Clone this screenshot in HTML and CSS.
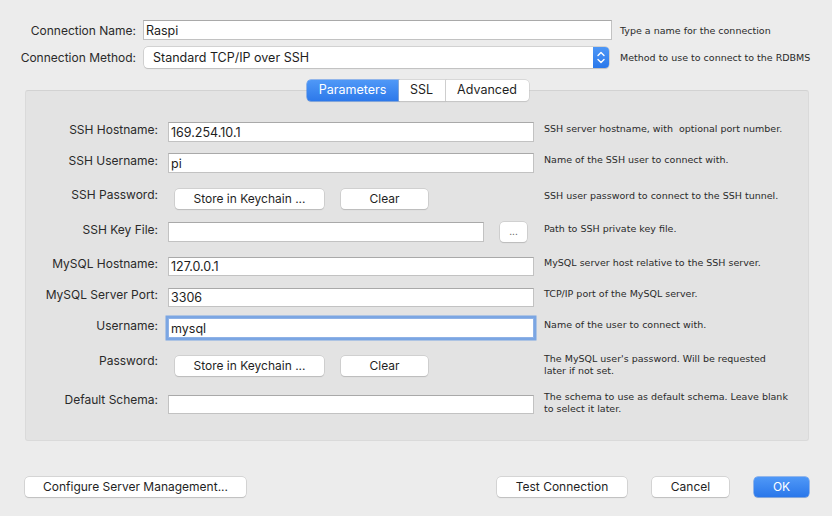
FILE: index.html
```html
<!DOCTYPE html>
<html>
<head>
<meta charset="utf-8">
<link rel="stylesheet" href="styles.css">
</head>
<body>
<div class="dialog">
  <div class="top">
    <div class="trow r1">
      <label class="lbl">Connection Name:</label>
      <div class="input wide">Raspi</div>
      <span class="help">Type a name for the connection</span>
    </div>
    <div class="trow r2">
      <label class="lbl">Connection Method:</label>
      <div class="select">
        <span>Standard TCP/IP over SSH</span>
        <span class="stepper">
          <svg width="16" height="21" viewBox="0 0 16 21"><path d="M5 8.5 L8 5.5 L11 8.5" fill="none" stroke="#fff" stroke-width="1.4" stroke-linecap="round" stroke-linejoin="round"/><path d="M5 12.5 L8 15.5 L11 12.5" fill="none" stroke="#fff" stroke-width="1.4" stroke-linecap="round" stroke-linejoin="round"/></svg>
        </span>
      </div>
      <span class="help">Method to use to connect to the RDBMS</span>
    </div>
  </div>

  <div class="panel-wrap">
    <div class="tabs">
      <span class="tab active">Parameters</span><span class="tab">SSL</span><span class="tab">Advanced</span>
    </div>
    <div class="panel">
      <div class="prow g1">
        <label class="lbl">SSH Hostname:</label>
        <div class="input">169.254.10.1</div>
        <span class="help">SSH server hostname, with&nbsp; optional port number.</span>
      </div>
      <div class="prow g2">
        <label class="lbl">SSH Username:</label>
        <div class="input">pi</div>
        <span class="help">Name of the SSH user to connect with.</span>
      </div>
      <div class="prow g3">
        <label class="lbl">SSH Password:</label>
        <div class="btns">
          <span class="btn keychain">Store in Keychain ...</span>
          <span class="btn clear">Clear</span>
        </div>
        <span class="help">SSH user password to connect to the SSH tunnel.</span>
      </div>
      <div class="prow g4">
        <label class="lbl">SSH Key File:</label>
        <div class="filebox">
          <div class="input keyfile"></div>
          <span class="btn dots">...</span>
        </div>
        <span class="help">Path to SSH private key file.</span>
      </div>
      <div class="prow g5">
        <label class="lbl">MySQL Hostname:</label>
        <div class="input">127.0.0.1</div>
        <span class="help">MySQL server host relative to the SSH server.</span>
      </div>
      <div class="prow g6">
        <label class="lbl">MySQL Server Port:</label>
        <div class="input">3306</div>
        <span class="help">TCP/IP port of the MySQL server.</span>
      </div>
      <div class="prow g7">
        <label class="lbl">Username:</label>
        <div class="input focus">mysql</div>
        <span class="help">Name of the user to connect with.</span>
      </div>
      <div class="prow g8">
        <label class="lbl">Password:</label>
        <div class="btns">
          <span class="btn keychain">Store in Keychain ...</span>
          <span class="btn clear">Clear</span>
        </div>
        <span class="help two">The MySQL user's password. Will be requested later if not set.</span>
      </div>
      <div class="prow g9">
        <label class="lbl">Default Schema:</label>
        <div class="input"></div>
        <span class="help two">The schema to use as default schema. Leave blank to select it later.</span>
      </div>
    </div>
  </div>

  <div class="footer">
    <span class="btn configure">Configure Server Management...</span>
    <div class="right">
      <span class="btn test">Test Connection</span>
      <span class="btn cancel">Cancel</span>
      <span class="btn ok">OK</span>
    </div>
  </div>
</div>
</body>
</html>
```

FILE: styles.css
```css
* { box-sizing: border-box; }
html, body { margin: 0; padding: 0; }
body {
  width: 832px;
  height: 516px;
  background: #ececec;
  font-family: Inter, "Liberation Sans", sans-serif;
  font-size: 12px;
  color: #262626;
  overflow: hidden;
}
.dialog { padding: 20px 0 0 0; }

.lbl {
  text-align: right;
  color: #2a2a2a;
  white-space: nowrap;
  font-size: 12px;
}
.help {
  font-family: "DejaVu Sans", sans-serif;
  font-size: 9.5px;
  color: #2a2a2a;
  white-space: nowrap;
}
.help.two { white-space: normal; line-height: 11.5px; }

.trow {
  display: grid;
  grid-template-columns: 136px 469px auto;
  column-gap: 7px;
  align-items: center;
}
.trow .help { margin-left: 1px; }
.r2 { margin-top: 7px; }
.r1 { height: 20px; }

.input {
  height: 20px;
  background: #fff;
  border: 1px solid #c2c2c2;
  border-top-color: #a9a9a9;
  padding: 0 0 0 2px;
  line-height: 19px;
  font-size: 12.5px;
  color: #1d1d1d;
}
.input.wide { width: 469px; }
.input.focus {
  box-shadow: 0 0 0 2.5px #7ba6e3;
  border-color: #8fb2e6;
}

.select {
  margin-left: 1px;
  width: 465px;
  height: 21px;
  background: #fff;
  border-radius: 4px;
  box-shadow: 0 0 0 0.5px #b8b8b8, 0 1px 1px rgba(0,0,0,0.15);
  display: flex;
  justify-content: space-between;
  align-items: center;
  padding-left: 9px;
  font-size: 12.5px;
  color: #1d1d1d;
}
.stepper {
  width: 16px;
  height: 21px;
  background: linear-gradient(#4d97f6, #2a78eb);
  border-radius: 0 4px 4px 0;
  display: block;
}
.stepper svg { display: block; }

.panel-wrap { margin-top: 12px; position: relative; padding: 0 23px 0 25px; }
.tabs {
  display: flex;
  justify-content: center;
  height: 21px;
  margin-left: 1px;
  position: relative;
  z-index: 2;
}
.tab {
  height: 21px;
  line-height: 20px;
  background: #fff;
  font-size: 12.5px;
  color: #1f1f1f;
  box-shadow: 0 0 0 0.5px #c4c4c4, 0 1px 1px rgba(0,0,0,0.12);
  text-align: center;
}
.tab:nth-child(1) { width: 92px; border-radius: 4px 0 0 4px; }
.tab:nth-child(2) { width: 47px; border-right: 1px solid #dcdcdc; }
.tab:nth-child(3) { width: 83px; border-radius: 0 4px 4px 0; }
.tab.active {
  background: linear-gradient(#4f98f7, #2d79ea);
  color: #fff;
  box-shadow: 0 0 0 0.5px #3a80e8, 0 1px 1px rgba(0,0,0,0.12);
}
.panel {
  margin-top: -11px;
  height: 351px;
  background: #e3e3e3;
  border: 1px solid #dadada;
  border-top-color: #d2d2d2;
  border-radius: 3px;
  padding-top: 31px;
}

.prow {
  display: grid;
  grid-template-columns: 132px 366px auto;
  column-gap: 10px;
  align-items: center;
  height: 20px;
}
.prow .lbl { margin-bottom: 5px; }
.g2 { margin-top: 11px; }
.g3 { margin-top: 14px; }
.g3 .lbl { margin-bottom: 8px; }
.g8 .lbl { margin-bottom: 10px; }
.g4 { margin-top: 15px; }
.g5 { margin-top: 14px; height: 19px; }
.g6 { margin-top: 12px; height: 19px; }
.g7 { margin-top: 12px; }
.g8 { margin-top: 15px; }
.g9 { margin-top: 19px; height: 19px; }
.g9 .lbl { margin-bottom: 9px; }
.g5 .input, .g6 .input, .g9 .input { height: 19px; line-height: 18px; }
.g8 .help, .g9 .help { align-self: start; margin-top: 0; }
.g9 .help { margin-top: -1px; width: 250px; }
.g8 .help { width: 240px; }
.g1 .help, .g2 .help, .g3 .help, .g4 .help, .g5 .help, .g6 .help, .g7 .help { margin-bottom: 7px; }

.btns { display: flex; padding-left: 7px; gap: 17px; }
.btn {
  display: inline-block;
  height: 20px;
  line-height: 19px;
  background: #fff;
  border-radius: 4px;
  box-shadow: 0 0 0 0.5px #bdbdbd, 0 1px 1px rgba(0,0,0,0.18);
  text-align: center;
  font-size: 12px;
  color: #1f1f1f;
}
.keychain { width: 149px; }
.clear { width: 87px; }

.filebox { display: flex; align-items: center; gap: 16px; }
.input.keyfile { width: 316px; }
.dots { width: 27px; font-size: 10px; line-height: 18px; color: #555; }

.footer {
  margin-top: 36px;
  display: flex;
  justify-content: space-between;
  padding: 0 23px 0 25px;
}
.configure { width: 221px; }
.right { display: flex; gap: 25px; }
.test { width: 130px; }
.cancel { width: 77px; margin-right: 1px; }
.ok {
  width: 55px;
  margin-left: -1px;
  background: linear-gradient(#4f98f7, #2a77ea);
  color: #fff;
  box-shadow: 0 0 0 0.5px #3a80e8, 0 1px 1px rgba(0,0,0,0.15);
}
```
